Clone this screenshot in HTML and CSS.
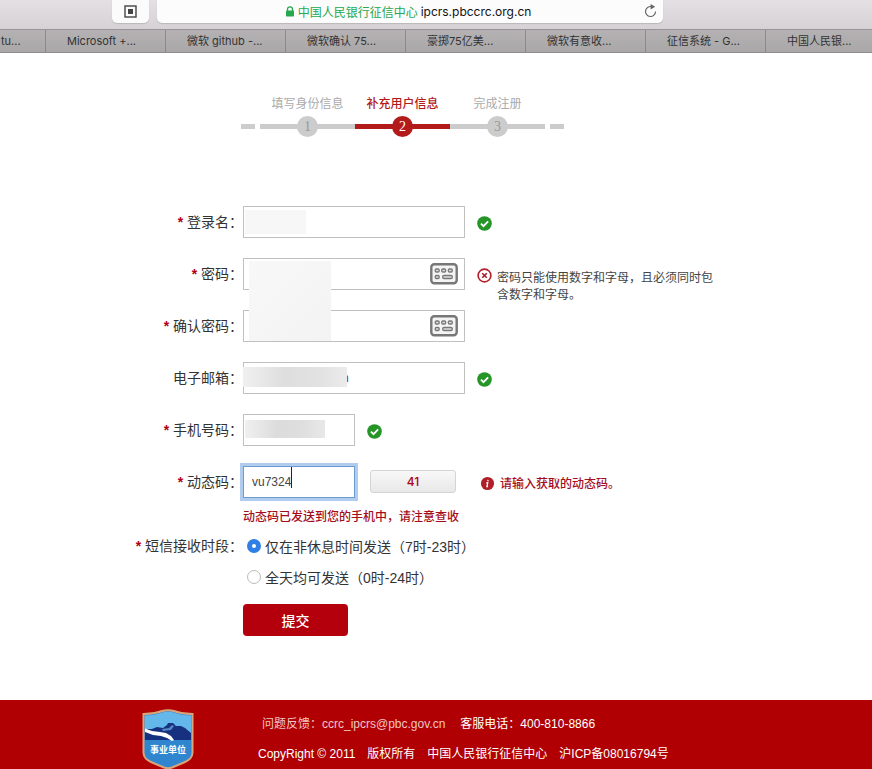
FILE: index.html
```html
<!DOCTYPE html>
<html lang="zh-CN">
<head>
  <meta charset="UTF-8" />
  <meta name="viewport" content="width=device-width, initial-scale=1" />
  <title>中国人民银行征信中心</title>
  <link rel="stylesheet" href="styles.css">
</head>
<body>

  <!-- Shared icons -->
  <svg class="sprite" aria-hidden="true">
    <symbol id="icon-ok" viewBox="0 0 16 16">
      <circle cx="8" cy="8" r="7.8" fill="#259528" />
      <path d="M4.2 8.2l2.7 2.7 5-5.2" fill="none" stroke="#fff" stroke-width="1.9" />
    </symbol>
    <symbol id="icon-error" viewBox="0 0 16 16">
      <circle cx="8" cy="8" r="6.8" fill="#fff" stroke="#b5202f" stroke-width="1.8" />
      <path d="M5.6 5.600l4.800 4.800M10.400 5.600l-4.800 4.800" stroke="#a81c2b" stroke-width="1.8" />
    </symbol>
    <symbol id="icon-info" viewBox="0 0 16 16">
      <circle cx="8" cy="8" r="7" fill="#b01e28" />
      <path d="M8.6 4.2l-.3 1.4M6.8 7.2h1.4l-.8 4h1.2" fill="none" stroke="#fff" stroke-width="1.4" />
    </symbol>
    <symbol id="icon-keyboard" viewBox="0 0 28 22">
      <rect x="1.3" y="1.3" width="25.4" height="19" rx="3" fill="#f4f4f4" stroke="#777" stroke-width="2.4" />
      <g fill="#ddd" stroke="#777" stroke-width="1.3">
        <rect x="5.2" y="6" width="4" height="3" rx="1.3" />
        <rect x="11.7" y="6" width="4" height="3" rx="1.3" />
        <rect x="18.3" y="6" width="4" height="3" rx="1.3" />
        <rect x="5.2" y="12.5" width="4" height="3" rx="1.3" />
        <rect x="12.7" y="12.5" width="9.6" height="3" rx="1.3" />
      </g>
    </symbol>
  </svg>

  <!-- Browser bar -->
  <header class="browser">
    <div class="toolbar">
      <button class="tool-btn" type="button" aria-label="阅读列表">
        <svg width="13" height="13" viewBox="0 0 13 13">
          <rect x="1" y="1" width="11" height="11" fill="none" stroke="#444" stroke-width="1.4" />
          <rect x="4" y="4" width="5" height="5" fill="#444" />
        </svg>
      </button>
      <div class="address">
        <svg width="10" height="11" viewBox="0 0 10 11">
          <path d="M2.5 5V3.3a2.5 2.5 0 0 1 5 0V5" fill="none" stroke="#27a84f" stroke-width="1.3" />
          <rect x="1" y="4.6" width="8" height="6" rx="0.8" fill="#27a84f" />
        </svg>
        <span class="owner">中国人民银行征信中心</span>
        <span class="host">ipcrs.pbccrc.org.cn</span>
        <button class="reload" type="button" aria-label="重新载入">
          <svg width="13" height="14" viewBox="0 0 13 14">
            <path d="M7.5 2.6A5 5 0 1 0 11.5 7.5" fill="none" stroke="#666" stroke-width="1.2" />
            <path d="M6.6 0l4.6 2.8-4.6 2.6z" fill="#666" />
          </svg>
        </button>
      </div>
    </div>
    <nav class="tabs">
      <a class="tab tab-cut" href="#">tu...</a>
      <a class="tab" href="#">Microsoft +...</a>
      <a class="tab" href="#">微软 github -...</a>
      <a class="tab" href="#">微软确认 75...</a>
      <a class="tab" href="#">豪掷75亿美...</a>
      <a class="tab" href="#">微软有意收...</a>
      <a class="tab" href="#">征信系统 - G...</a>
      <a class="tab" href="#">中国人民银...</a>
    </nav>
  </header>

  <main>
    <!-- Registration steps -->
    <ol class="steps">
      <li class="step"><span class="step-name">填写身份信息</span><span class="step-line"><b>1</b></span></li>
      <li class="step active"><span class="step-name">补充用户信息</span><span class="step-line"><b>2</b></span></li>
      <li class="step"><span class="step-name">完成注册</span><span class="step-line"><b>3</b></span></li>
    </ol>

    <form class="form">
      <div class="row">
        <label class="name" for="login"><i>*</i> 登录名：</label>
        <div class="field">
          <input id="login" type="text">
          <span class="mask mask-login"></span>
        </div>
        <svg class="status"><use href="#icon-ok" /></svg>
      </div>

      <div class="row">
        <label class="name" for="pwd"><i>*</i> 密码：</label>
        <div class="field">
          <input id="pwd" type="password">
          <button class="keyboard" type="button" aria-label="软键盘"><svg><use href="#icon-keyboard" /></svg></button>
          <span class="mask mask-pwd"></span>
        </div>
        <svg class="status"><use href="#icon-error" /></svg>
        <p class="message">密码只能使用数字和字母，且必须同时包含数字和字母。</p>
      </div>

      <div class="row">
        <label class="name" for="pwd2"><i>*</i> 确认密码：</label>
        <div class="field">
          <input id="pwd2" type="password">
          <button class="keyboard" type="button" aria-label="软键盘"><svg><use href="#icon-keyboard" /></svg></button>
        </div>
      </div>

      <div class="row">
        <label class="name" for="email">电子邮箱：</label>
        <div class="field">
          <input id="email" class="email" type="text" value="n">
          <span class="mask mask-email"></span>
        </div>
        <svg class="status"><use href="#icon-ok" /></svg>
      </div>

      <div class="row">
        <label class="name" for="phone"><i>*</i> 手机号码：</label>
        <div class="field short">
          <input id="phone" type="text">
          <span class="mask mask-phone"></span>
        </div>
        <svg class="status"><use href="#icon-ok" /></svg>
      </div>

      <div class="row row-code">
        <label class="name" for="code"><i>*</i> 动态码：</label>
        <div class="field short">
          <input id="code" class="focused" type="text" value="vu7324">
          <span class="caret"></span>
        </div>
        <button class="countdown" type="button">41</button>
        <svg class="status"><use href="#icon-info" /></svg>
        <p class="message warn">请输入获取的动态码。</p>
      </div>
      <p class="hint">动态码已发送到您的手机中，请注意查收</p>

      <div class="row row-radio">
        <span class="name" id="period"><i>*</i> 短信接收时段：</span>
        <div class="options" role="radiogroup" aria-labelledby="period">
          <label><input type="radio" name="period" checked>仅在非休息时间发送（7时-23时）</label>
          <label><input type="radio" name="period">全天均可发送（0时-24时）</label>
        </div>
      </div>

      <button class="submit" type="submit">提交</button>
    </form>
  </main>

  <footer>
    <svg class="badge" viewBox="0 0 52 60">
      <path d="M1.5 5Q14 4.500 20 2 26 0.500 32 2 38 4.500 50.500 5V44Q50 50 43 53L30 58.500Q26 60 22 58.500L9 53Q2 50 1.500 44Z" fill="#2f86cf" stroke="#d9a578" stroke-width="2" />
      <path d="M3 6.500Q14 6 20 3.500 26 2 32 3.500 38 6 49 6.500V31H3Z" fill="#63b7ea" />
      <path d="M3 20l7 0 5-2 6 1 4-3 1-2h5l3 3 5 0 4 2 6 5v7H3Z" fill="#15317f" />
      <path d="M3 19.500l7 2.500 8 1 6 1 5 3 3 4-2 1-5-3-6-2-8-1-8-3Z" fill="#fff" />
      <path d="M20 20l7-1 3-3 2 1-3 4-8 1Z" fill="#5686c4" />
      <text x="26" y="44" text-anchor="middle">事业单位</text>
    </svg>
    <div class="footer-text">
      <p class="contact"><span class="feedback">问题反馈：ccrc_ipcrs@pbc.gov.cn</span><span>客服电话：400-810-8866</span></p>
      <p>CopyRight © 2011　版权所有　中国人民银行征信中心　沪ICP备08016794号</p>
    </div>
  </footer>
</body>
</html>
```
FILE: styles.css
```css
* {
  box-sizing: border-box;
}

body {
  margin: 0;
  background: #fff;
  color: #333;
  font-family: "Liberation Sans", "Noto Sans CJK SC", sans-serif;
  font-size: 14px;
}

p {
  margin: 0;
}

button {
  font-family: inherit;
  cursor: pointer;
}

.sprite {
  display: none;
}

/* Browser bar */
.browser {
  font-family: Inter, "Noto Sans CJK SC", sans-serif;
}

.toolbar {
  display: flex;
  gap: 8px;
  height: 29px;
  padding: 0 209px 6px 112px;
  background: linear-gradient(#e4e0e3, #d5d1d4);
}

.tool-btn {
  width: 37px;
  padding: 0;
  border: none;
  border-radius: 0 0 5px 5px;
  background: #fbfbfb;
  box-shadow: 0 1px 1px #bbb7ba;
}

.tool-btn svg {
  display: block;
  margin: 0 auto;
}

.address {
  position: relative;
  flex: 1;
  display: flex;
  align-items: center;
  justify-content: center;
  gap: 3px;
  padding-right: 4px;
  border-radius: 0 0 5px 5px;
  background: #fcfcfc;
  box-shadow: 0 1px 1px #bbb7ba;
  font-size: 12px;
  white-space: nowrap;
}

.owner {
  color: #27a84f;
}

.host {
  color: #111;
}

.reload {
  position: absolute;
  right: 6px;
  top: 4px;
  padding: 0;
  border: none;
  background: none;
}

.reload svg {
  display: block;
}

.tabs {
  display: flex;
  height: 24px;
  overflow: hidden;
  border-top: 1px solid #989497;
  border-bottom: 1px solid #8f8b8e;
  background: linear-gradient(#b5b1b4, #aaa7a9);
}

.tab {
  flex: 0 0 120px;
  padding-left: 21px;
  border-right: 1px solid #8d898c;
  color: #333;
  font-size: 11px;
  line-height: 23px;
  text-decoration: none;
  white-space: nowrap;
}

.tab-cut {
  flex-basis: 46px;
  padding-left: 1px;
}

/* Steps */
main {
  padding: 42px 0 64px;
}

.steps {
  display: flex;
  align-items: flex-end;
  margin: 0 0 69px 241px;
  padding: 0;
  list-style: none;
}

.steps::before,
.steps::after {
  content: "";
  width: 14px;
  height: 5px;
  margin: 0 5px 8px 0;
  background: #ccc;
}

.steps::after {
  margin: 0 0 8px 5px;
}

.step {
  width: 95px;
  color: #aaa;
  text-align: center;
}

.step-name {
  display: block;
  font-size: 12px;
  line-height: 18px;
  white-space: nowrap;
}

.step-line {
  display: block;
  height: 21px;
  margin-top: 3px;
  background: linear-gradient(#ccc, #ccc) center / 100% 5px no-repeat;
}

.step b {
  display: block;
  width: 21px;
  height: 21px;
  margin: 0 auto;
  border-radius: 50%;
  background: #ccc;
  color: #999;
  font: 14px/21px "Liberation Serif", serif;
}

.active {
  color: #b31b1b;
}

.active .step-name {
  font-weight: 500;
}

.active .step-line {
  background-image: linear-gradient(#b31b1b, #b31b1b);
}

.active b {
  background: #b31b1b;
  color: #fff;
}

/* Form */
.row {
  display: flex;
  align-items: flex-start;
  min-height: 52px;
}

.name {
  flex: 0 0 243px;
  line-height: 32px;
  text-align: right;
}

.name i {
  color: #b0000f;
  font-style: normal;
  font-weight: bold;
}

.field {
  position: relative;
  width: 222px;
}

.short {
  width: 112px;
}

.field input {
  display: block;
  width: 100%;
  height: 32px;
  padding: 0 8px;
  border: 1px solid #c0c0c0;
  background: #fff;
  color: #444;
  font-family: inherit;
  font-size: 12px;
}

.field .email {
  padding-left: 98px;
}

.field .focused {
  border-color: #6c9bd0;
  outline: 3px solid #b0cdf0;
}

.caret {
  position: absolute;
  left: 48px;
  top: 1px;
  width: 1px;
  height: 21px;
  background: #222;
}

.keyboard {
  position: absolute;
  right: 7px;
  top: 5px;
  padding: 0;
  border: none;
  background: none;
}

.keyboard svg {
  display: block;
  width: 28px;
  height: 22px;
}

/* Blurred-out personal data */
.mask {
  position: absolute;
  z-index: 1;
  background: #f7f7f7;
}

.mask-login {
  left: 2px;
  top: 4px;
  width: 61px;
  height: 24px;
}

.mask-pwd {
  left: 6px;
  top: 3px;
  width: 82px;
  height: 80px;
  background: linear-gradient(135deg, #f8f8f8, #f3f3f3);
}

.mask-email {
  left: 0;
  top: 5px;
  width: 104px;
  height: 20px;
  background: linear-gradient(90deg, #f0f0f0, #dedede 40%, #e2e2e2 75%, #ebebeb);
}

.mask-phone {
  left: 2px;
  top: 6px;
  width: 80px;
  height: 18px;
  background: linear-gradient(90deg, #f0f0f0, #dcdcdc 40%, #dedede 70%, #e8e8e8);
}

.status {
  flex: none;
  width: 15px;
  height: 15px;
  margin: 10px 5px 0 12px;
}

.message {
  width: 216px;
  padding-top: 12px;
  color: #444;
  font-size: 12px;
  line-height: 17px;
}

.row-code {
  min-height: 42px;
}

.countdown {
  width: 86px;
  height: 23px;
  margin: 4px 12px 0 15px;
  padding: 0;
  border: 1px solid #d4d4d4;
  border-radius: 3px;
  background: linear-gradient(#f8f8f8, #e8e8e8);
  color: #b0000f;
  font-family: Inter, sans-serif;
  font-size: 12px;
  font-weight: 500;
}

.warn,
.hint {
  color: #a50d1c;
  font-weight: 500;
}

.warn {
  padding-top: 10px;
}

.hint {
  padding-left: 243px;
  font-size: 12px;
  line-height: 18px;
}

.row-radio {
  padding-top: 4px;
}

.options {
  padding-left: 4px;
}

.options label {
  display: flex;
  align-items: center;
  gap: 4px;
  height: 31px;
}

.options input {
  appearance: none;
  width: 14px;
  height: 14px;
  margin: 0;
  border: 1px solid #bbb;
  border-radius: 50%;
  background: #fff;
}

.options input:checked {
  border: 5px solid #2f7fe6;
}

.submit {
  display: block;
  width: 105px;
  height: 32px;
  margin: 12px 0 0 243px;
  border: none;
  border-radius: 4px;
  background: #b4000c;
  color: #fff;
  font-size: 14px;
  font-weight: 500;
}

/* Footer */
footer {
  display: flex;
  gap: 64px;
  padding: 9px 0 0 142px;
  background: #b10003;
  color: #fff;
  font-size: 12px;
}

.badge {
  display: block;
  width: 52px;
  height: 60px;
}

.badge text {
  fill: #fff;
  font-size: 9px;
  font-weight: bold;
}

.footer-text p {
  line-height: 30px;
}

.contact {
  display: flex;
  gap: 15px;
  padding-left: 4px;
}

.feedback {
  color: #f0c4c4;
}
```
